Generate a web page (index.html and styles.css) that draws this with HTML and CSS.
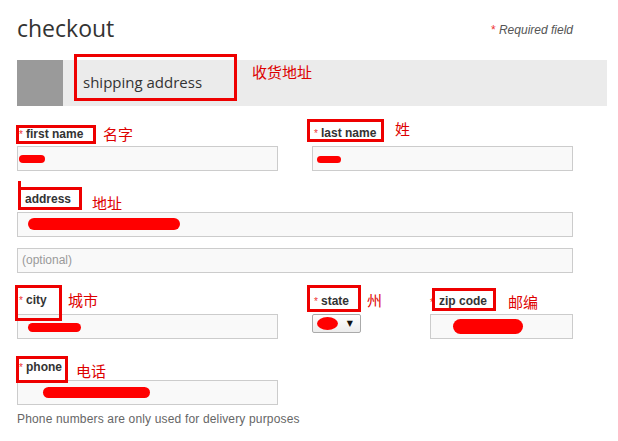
FILE: index.html
```html
<!DOCTYPE html>
<html lang="en">
<head>
  <meta charset="UTF-8" />
  <title>Checkout - shipping address</title>
  <link rel="stylesheet" href="styles.css">
</head>
<body>

  <div class="page">
    <div class="head">
      <h1>checkout</h1>
      <div class="required"><span class="req">*</span> Required field</div>
    </div>

    <div class="bar">
      <div class="bar-block"></div>
      <div class="bar-title">shipping address</div>
      <span class="note note-bar">收货地址</span>
    </div>

    <!-- name row -->
    <div class="row row-first">
      <div class="field c1">
        <div class="label-row">
          <span class="mark m-first"><span class="req">*</span>first name</span>
          <span class="note n-first">名字</span>
        </div>
        <div class="input"><span class="scribble s-first"></span></div>
      </div>
      <div class="field c34">
        <div class="label-row">
          <span class="mark m-last"><span class="req">*</span>last name</span>
          <span class="note n-last">姓</span>
        </div>
        <div class="input"><span class="scribble s-last"></span></div>
      </div>
    </div>

    <!-- address -->
    <div class="row">
      <div class="field wide">
        <div class="label-row">
          <span class="mark m-addr">address</span>
          <span class="note n-addr">地址</span>
        </div>
        <div class="input"><span class="scribble s-addr"></span></div>
      </div>
    </div>

    <div class="row row-opt">
      <div class="field wide">
        <div class="input placeholder">(optional)</div>
      </div>
    </div>

    <!-- city / state / zip -->
    <div class="row">
      <div class="field c1">
        <div class="label-row">
          <span class="mark m-city"><span class="req">*</span>city</span>
          <span class="note n-city">城市</span>
        </div>
        <div class="input"><span class="scribble s-city"></span></div>
      </div>
      <div class="field c3">
        <div class="label-row">
          <span class="mark m-state"><span class="req">*</span>state</span>
          <span class="note n-state">州</span>
        </div>
        <div class="select">
          <span class="scribble s-state"></span>
          <span class="arrow">▼</span>
        </div>
      </div>
      <div class="field c4">
        <div class="label-row">
          <span class="zip-req">*</span>
          <span class="mark m-zip">zip code</span>
          <span class="note n-zip">邮编</span>
        </div>
        <div class="input"><span class="scribble s-zip"></span></div>
      </div>
    </div>

    <!-- phone -->
    <div class="row">
      <div class="field c1">
        <div class="label-row">
          <span class="mark m-phone"><span class="req">*</span>phone</span>
          <span class="note n-phone">电话</span>
        </div>
        <div class="input"><span class="scribble s-phone"></span></div>
      </div>
    </div>

    <div class="hint">Phone numbers are only used for delivery purposes</div>
  </div>

</body>
</html>
```

FILE: styles.css
```css
body {
  margin: 0;
  font-family: 'Liberation Sans', Arial, sans-serif;
  color: #333;
  background: #fff;
}

.page {
  width: 590px;
  padding: 14px 0 0 17px;
}

.head {
  width: 556px;
  display: flex;
  justify-content: space-between;
  align-items: flex-start;
}

h1 {
  margin: 0;
  font-family: 'Open Sans', sans-serif;
  font-size: 23px;
  font-weight: normal;
  line-height: 28px;
  color: #333;
}

.required {
  margin-top: 9px;
  font-size: 12px;
  line-height: 14px;
  font-style: italic;
  color: #555;
}

.req {
  color: #e33;
  font-style: normal;
}

/* section bar */
.bar {
  margin-top: 18px;
  height: 46px;
  background: #ebebeb;
  display: flex;
  align-items: flex-start;
}

.bar-block {
  width: 46px;
  height: 46px;
  background: #9a9a9a;
}

.bar-title {
  margin: -6px 0 0 11px;
  width: 163px;
  height: 47px;
  box-sizing: border-box;
  border: 3px solid #e00;
  padding: 12px 0 0 6px;
  font-family: 'Open Sans', sans-serif;
  font-size: 15px;
  line-height: 26px;
  color: #333;
}

.note {
  font-family: 'Noto Sans CJK SC', sans-serif;
  font-size: 15px;
  line-height: 15px;
  color: #d00;
  white-space: nowrap;
}

.note-bar { margin: 4px 0 0 15px; }

/* form rows */
.row {
  width: 556px;
  display: grid;
  grid-template-columns: 261px 34px 118px 143px;
}

.row-first { margin-top: -1px; }
.row-opt { margin-top: 11px; }

.c1 { grid-column: 1; }
.c3 { grid-column: 3; }
.c4 { grid-column: 4; }
.c34 { grid-column: 3 / 5; }
.wide { grid-column: 1 / 5; }

.label-row {
  height: 41px;
  display: flex;
  align-items: flex-start;
}

.mark {
  position: relative;
  box-sizing: border-box;
  border: 3px solid #e00;
  font-size: 12px;
  font-weight: bold;
  line-height: 13px;
  color: #333;
  white-space: nowrap;
}

.mark .req {
  display: inline-block;
  width: 7px;
  font-size: 10px;
  font-weight: normal;
}

.m-first { width: 80px; height: 19px; margin: 20px 0 0 -1px; padding: 0; }
.n-first { margin: 21px 0 0 7px; }

.m-last { width: 77px; height: 23px; margin: 14px 0 0 -5px; padding: 5px 0 0 4px; }
.n-last { margin: 16px 0 0 11px; }

.m-addr { width: 64px; height: 23px; margin: 16px 0 0 1px; padding: 3px 0 0 4px; }
.m-addr::before {
  content: "";
  position: absolute;
  left: -3px;
  top: -9px;
  width: 3px;
  height: 6px;
  background: #e00;
}
.n-addr { margin: 24px 0 0 10px; }

.m-city { width: 47px; height: 36px; margin: 12px 0 0 -2px; padding: 6px 0 0 1px; }
.n-city { margin: 19px 0 0 6px; }

.m-state { width: 54px; height: 27px; margin: 12px 0 0 -5px; padding: 7px 0 0 4px; }
.n-state { margin: 19px 0 0 6px; }

.zip-req {
  width: 2px;
  margin-top: 23px;
  font-size: 10px;
  line-height: 13px;
  color: #e33;
}
.m-zip { width: 64px; height: 23px; margin: 15px 0 0 0; padding: 4px 0 0 4px; }
.n-zip { margin: 21px 0 0 12px; }

.m-phone { width: 52px; height: 27px; margin: 17px 0 0 -1px; padding: 2px 0 0 0; }
.n-phone { margin: 24px 0 0 8px; }

/* inputs */
.input {
  height: 25px;
  box-sizing: border-box;
  border: 1px solid #ccc;
  background: #f9f9f9;
}

.placeholder {
  padding: 0 4px;
  font-size: 12px;
  line-height: 23px;
  color: #999;
}

.select {
  width: 49px;
  height: 19px;
  box-sizing: border-box;
  border: 1px solid #aaa;
  border-radius: 2px;
  background: linear-gradient(#fff, #ececec);
  display: flex;
  align-items: center;
  justify-content: space-between;
  padding: 0 7px 0 4px;
}

.arrow {
  font-family: 'DejaVu Sans', sans-serif;
  font-size: 8px;
  line-height: 8px;
  color: #111;
}

/* red scribbles over the entered values */
.scribble {
  display: block;
  background: #f00;
  border-radius: 5px;
}

.s-first { width: 26px; height: 8px; margin: 8px 0 0 1px; }
.s-last { width: 24px; height: 7px; margin: 9px 0 0 4px; }
.s-addr { width: 152px; height: 12px; margin: 5px 0 0 10px; border-radius: 6px; }
.s-city { width: 53px; height: 9px; margin: 8px 0 0 10px; }
.s-zip { width: 70px; height: 15px; margin: 4px 0 0 22px; border-radius: 8px; }
.s-phone { width: 107px; height: 11px; margin: 6px 0 0 25px; border-radius: 6px; }
.s-state { width: 21px; height: 13px; border-radius: 50%; }

.hint {
  margin-top: 7px;
  font-size: 12px;
  line-height: 14px;
  letter-spacing: 0.16px;
  color: #666;
}
```
